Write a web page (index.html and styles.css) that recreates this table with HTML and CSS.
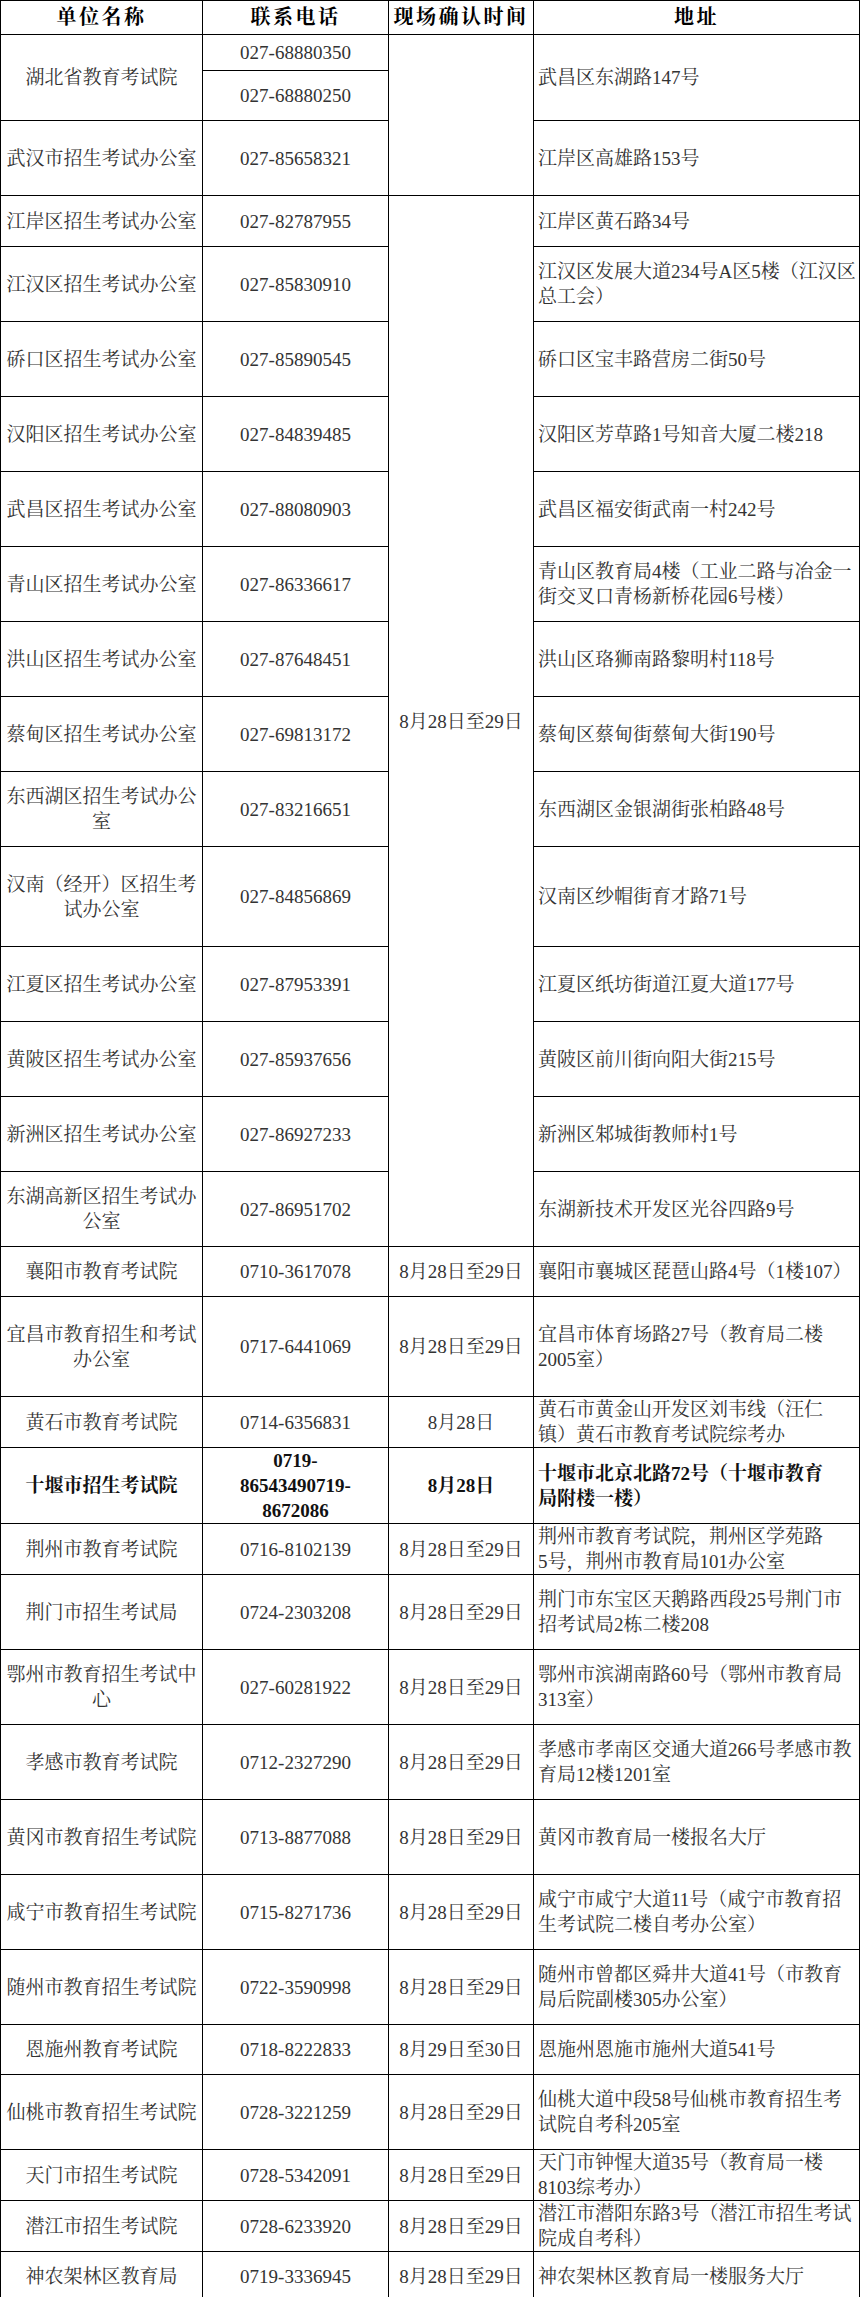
FILE: index.html
```html
<!DOCTYPE html>
<html lang="zh-CN">
<head>
<meta charset="utf-8">
<title>现场确认地点</title>
<link rel="stylesheet" href="styles.css">
</head>
<body>
<table class="sched">
  <thead>
    <tr class="h34">
      <th class="c1">单位名称</th>
      <th class="c2">联系电话</th>
      <th class="c3">现场确认时间</th>
      <th class="c4">地址</th>
    </tr>
  </thead>
  <tbody>
    <tr class="h36">
      <td rowspan="2">湖北省教育考试院</td>
      <td>027-68880350</td>
      <td rowspan="3"></td>
      <td rowspan="2" class="addr">武昌区东湖路147号</td>
    </tr>
    <tr class="h50">
      <td>027-68880250</td>
    </tr>
    <tr class="h75">
      <td>武汉市招生考试办公室</td>
      <td>027-85658321</td>
      <td class="addr">江岸区高雄路153号</td>
    </tr>
    <tr class="h51">
      <td>江岸区招生考试办公室</td>
      <td>027-82787955</td>
      <td rowspan="14">8月28日至29日</td>
      <td class="addr">江岸区黄石路34号</td>
    </tr>
    <tr class="h75">
      <td>江汉区招生考试办公室</td>
      <td>027-85830910</td>
      <td class="addr">江汉区发展大道234号A区5楼（江汉区<br>总工会）</td>
    </tr>
    <tr class="h75">
      <td>硚口区招生考试办公室</td>
      <td>027-85890545</td>
      <td class="addr">硚口区宝丰路营房二街50号</td>
    </tr>
    <tr class="h75">
      <td>汉阳区招生考试办公室</td>
      <td>027-84839485</td>
      <td class="addr">汉阳区芳草路1号知音大厦二楼218</td>
    </tr>
    <tr class="h75">
      <td>武昌区招生考试办公室</td>
      <td>027-88080903</td>
      <td class="addr">武昌区福安街武南一村242号</td>
    </tr>
    <tr class="h75">
      <td>青山区招生考试办公室</td>
      <td>027-86336617</td>
      <td class="addr">青山区教育局4楼（工业二路与冶金一<br>街交叉口青杨新桥花园6号楼）</td>
    </tr>
    <tr class="h75">
      <td>洪山区招生考试办公室</td>
      <td>027-87648451</td>
      <td class="addr">洪山区珞狮南路黎明村118号</td>
    </tr>
    <tr class="h75">
      <td>蔡甸区招生考试办公室</td>
      <td>027-69813172</td>
      <td class="addr">蔡甸区蔡甸街蔡甸大街190号</td>
    </tr>
    <tr class="h75">
      <td>东西湖区招生考试办公<br>室</td>
      <td>027-83216651</td>
      <td class="addr">东西湖区金银湖街张柏路48号</td>
    </tr>
    <tr class="h100">
      <td>汉南（经开）区招生考<br>试办公室</td>
      <td>027-84856869</td>
      <td class="addr">汉南区纱帽街育才路71号</td>
    </tr>
    <tr class="h75">
      <td>江夏区招生考试办公室</td>
      <td>027-87953391</td>
      <td class="addr">江夏区纸坊街道江夏大道177号</td>
    </tr>
    <tr class="h75">
      <td>黄陂区招生考试办公室</td>
      <td>027-85937656</td>
      <td class="addr">黄陂区前川街向阳大街215号</td>
    </tr>
    <tr class="h75">
      <td>新洲区招生考试办公室</td>
      <td>027-86927233</td>
      <td class="addr">新洲区邾城街教师村1号</td>
    </tr>
    <tr class="h75">
      <td>东湖高新区招生考试办<br>公室</td>
      <td>027-86951702</td>
      <td class="addr">东湖新技术开发区光谷四路9号</td>
    </tr>
    <tr class="h50">
      <td>襄阳市教育考试院</td>
      <td>0710-3617078</td>
      <td>8月28日至29日</td>
      <td class="addr">襄阳市襄城区琵琶山路4号（1楼107）</td>
    </tr>
    <tr class="h100">
      <td>宜昌市教育招生和考试<br>办公室</td>
      <td>0717-6441069</td>
      <td>8月28日至29日</td>
      <td class="addr">宜昌市体育场路27号（教育局二楼<br>2005室）</td>
    </tr>
    <tr class="h50">
      <td>黄石市教育考试院</td>
      <td>0714-6356831</td>
      <td>8月28日</td>
      <td class="addr">黄石市黄金山开发区刘韦线（汪仁<br>镇）黄石市教育考试院综考办</td>
    </tr>
    <tr class="h75 strong">
      <td>十堰市招生考试院</td>
      <td>0719-<br>86543490719-<br>8672086</td>
      <td>8月28日</td>
      <td class="addr">十堰市北京北路72号（十堰市教育<br>局附楼一楼）</td>
    </tr>
    <tr class="h50">
      <td>荆州市教育考试院</td>
      <td>0716-8102139</td>
      <td>8月28日至29日</td>
      <td class="addr">荆州市教育考试院，荆州区学苑路<br>5号，荆州市教育局101办公室</td>
    </tr>
    <tr class="h75">
      <td>荆门市招生考试局</td>
      <td>0724-2303208</td>
      <td>8月28日至29日</td>
      <td class="addr">荆门市东宝区天鹅路西段25号荆门市<br>招考试局2栋二楼208</td>
    </tr>
    <tr class="h75">
      <td>鄂州市教育招生考试中<br>心</td>
      <td>027-60281922</td>
      <td>8月28日至29日</td>
      <td class="addr">鄂州市滨湖南路60号（鄂州市教育局<br>313室）</td>
    </tr>
    <tr class="h75">
      <td>孝感市教育考试院</td>
      <td>0712-2327290</td>
      <td>8月28日至29日</td>
      <td class="addr">孝感市孝南区交通大道266号孝感市教<br>育局12楼1201室</td>
    </tr>
    <tr class="h75">
      <td>黄冈市教育招生考试院</td>
      <td>0713-8877088</td>
      <td>8月28日至29日</td>
      <td class="addr">黄冈市教育局一楼报名大厅</td>
    </tr>
    <tr class="h75">
      <td>咸宁市教育招生考试院</td>
      <td>0715-8271736</td>
      <td>8月28日至29日</td>
      <td class="addr">咸宁市咸宁大道11号（咸宁市教育招<br>生考试院二楼自考办公室）</td>
    </tr>
    <tr class="h75">
      <td>随州市教育招生考试院</td>
      <td>0722-3590998</td>
      <td>8月28日至29日</td>
      <td class="addr">随州市曾都区舜井大道41号（市教育<br>局后院副楼305办公室）</td>
    </tr>
    <tr class="h50">
      <td>恩施州教育考试院</td>
      <td>0718-8222833</td>
      <td>8月29日至30日</td>
      <td class="addr">恩施州恩施市施州大道541号</td>
    </tr>
    <tr class="h75">
      <td>仙桃市教育招生考试院</td>
      <td>0728-3221259</td>
      <td>8月28日至29日</td>
      <td class="addr">仙桃大道中段58号仙桃市教育招生考<br>试院自考科205室</td>
    </tr>
    <tr class="h50">
      <td>天门市招生考试院</td>
      <td>0728-5342091</td>
      <td>8月28日至29日</td>
      <td class="addr">天门市钟惺大道35号（教育局一楼<br>8103综考办）</td>
    </tr>
    <tr class="h50">
      <td>潜江市招生考试院</td>
      <td>0728-6233920</td>
      <td>8月28日至29日</td>
      <td class="addr">潜江市潜阳东路3号（潜江市招生考试<br>院成自考科）</td>
    </tr>
    <tr class="h50">
      <td>神农架林区教育局</td>
      <td>0719-3336945</td>
      <td>8月28日至29日</td>
      <td class="addr">神农架林区教育局一楼服务大厅</td>
    </tr>
  </tbody>
</table>
</body>
</html>
```

FILE: styles.css
```css
html, body {
  margin: 0;
  padding: 0;
  background: #fff;
}

.sched {
  border-collapse: separate;
  border-spacing: 0;
  table-layout: fixed;
  width: 860px;
  border-top: 1px solid #000;
  border-left: 1px solid #000;
  font-family: "Liberation Serif", "Noto Serif CJK SC", "Noto Sans CJK SC", serif;
  font-size: 19px;
  line-height: 25px;
  color: #333;
}

.sched th,
.sched td {
  box-sizing: border-box;
  border-right: 1px solid #000;
  border-bottom: 1px solid #000;
  padding: 0 4px;
  vertical-align: middle;
  text-align: center;
  white-space: nowrap;
  overflow: hidden;
}

.sched th {
  font-weight: bold;
  color: #000;
  font-size: 20px;
  letter-spacing: 2.5px;
}

.c1 { width: 202px; }
.c2 { width: 186px; }
.c3 { width: 145px; }
.c4 { width: 326px; }

.sched td.addr {
  text-align: left;
}

.strong td {
  font-weight: bold;
  color: #111;
}

.h34 { height: 34px; }
.h36 { height: 36px; }
.h50 { height: 50px; }
.h51 { height: 51px; }
.h75 { height: 75px; }
.h100 { height: 100px; }
```
